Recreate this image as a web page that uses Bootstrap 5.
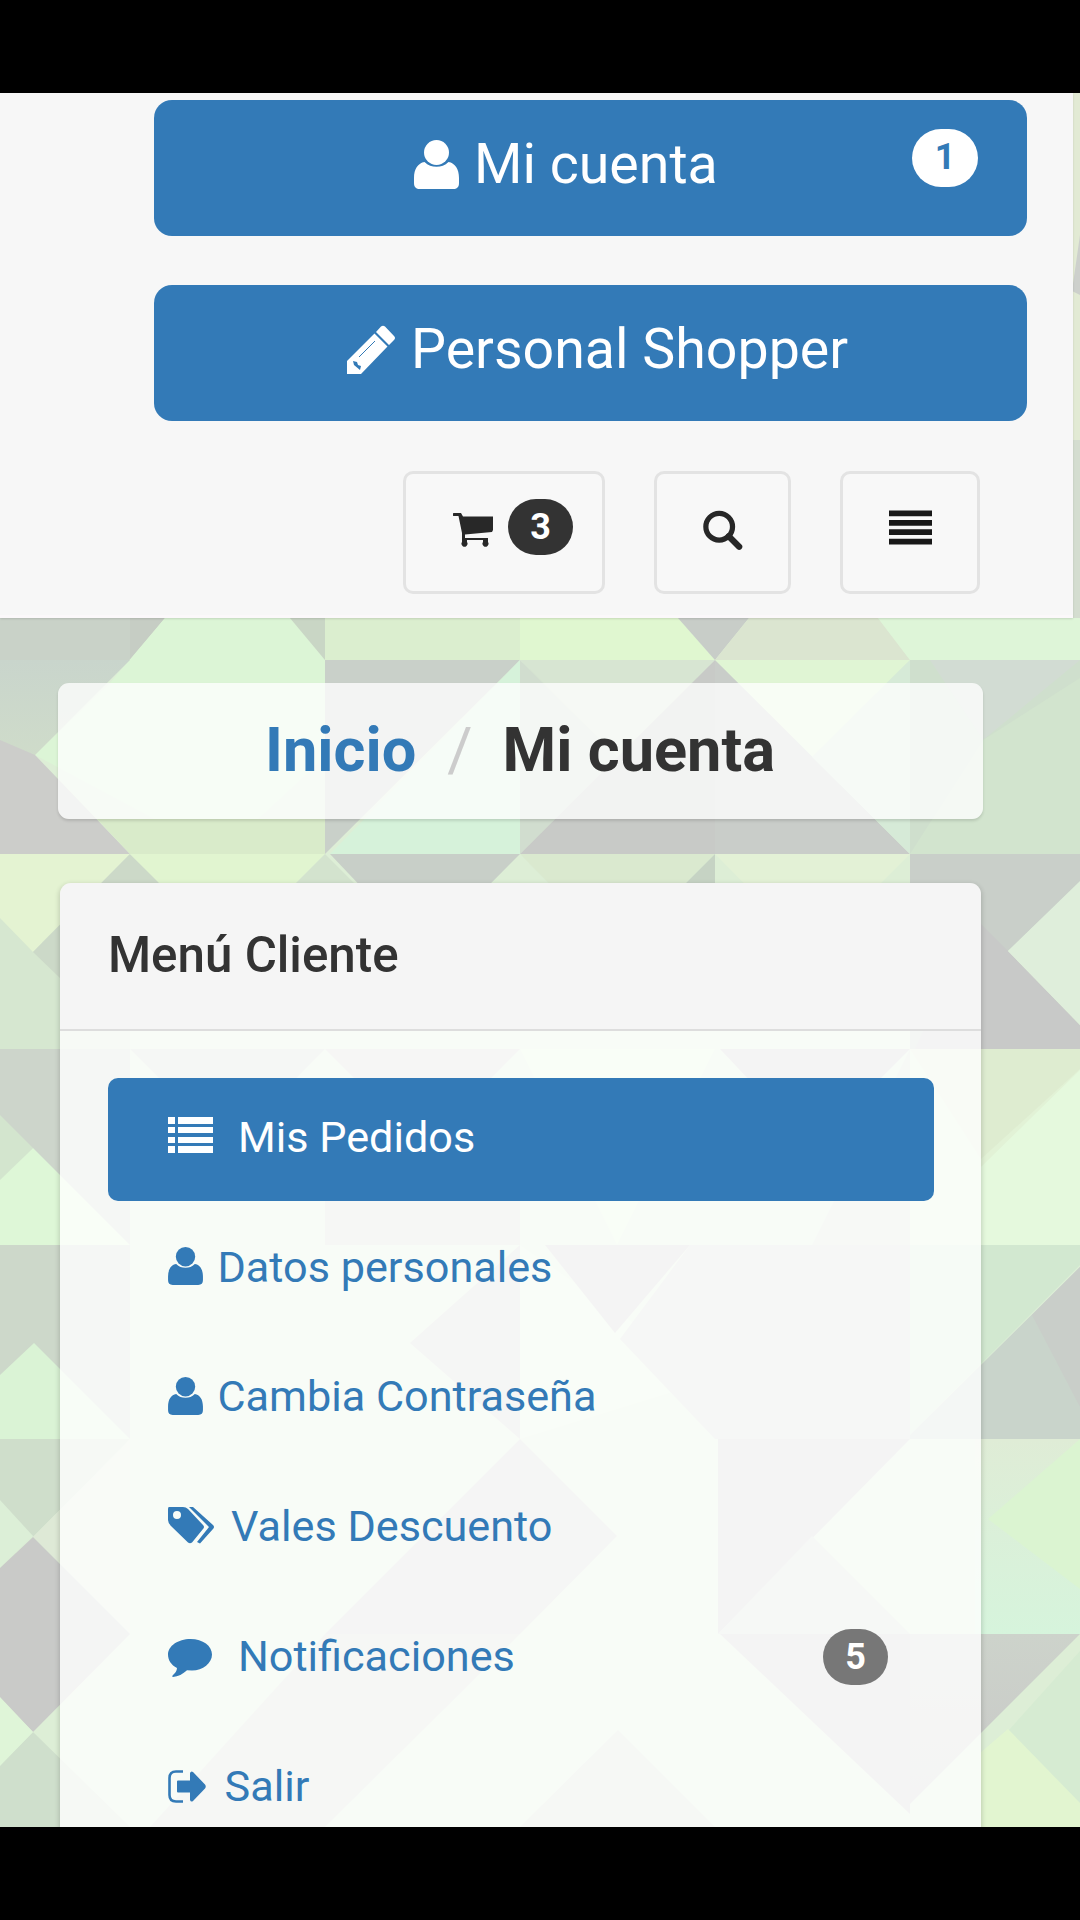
<!DOCTYPE html>
<html lang="es">
<head>
<meta charset="utf-8">
<meta name="viewport" content="width=device-width, initial-scale=1">
<title>Mi cuenta</title>
<link href="https://cdn.jsdelivr.net/npm/bootstrap@5.3.0/dist/css/bootstrap.min.css" rel="stylesheet">
<style>
body{background:#000;font-family:Roboto,"Liberation Sans",sans-serif;color:#333;width:1080px;height:1920px;overflow:hidden}
.screen{height:1734px;margin-top:93px;overflow:hidden;background:#d6e4d0}
.backdrop{position:absolute;left:0;top:0;z-index:0}
.topbar{width:1073px;height:525px;background:#f7f7f7;padding:6.5px 46px 0 154px;border-bottom:3px solid #fbf8fa;box-shadow:0 1px 2px rgba(0,0,0,.12)}
.btn-main{height:136px;border-radius:18px;background:#337ab7;color:#fff;font-size:55.5px;line-height:1;padding:0 0 6px;border:0}
.btn-main:hover{background:#286090;color:#fff}
.btn-tool{height:123px;border:3px solid #e3e3e3;border-radius:10px;background:#f8f8f8;padding:0;color:#222}
.pill{width:65px;height:56px;border-radius:28px;font-size:36px;font-weight:700;line-height:56px;padding:0;text-align:center;display:block}
.btn .pill-one{right:49px;top:29.5px;background:#fff;color:#337ab7;height:58px;width:66px;border-radius:29px}
.pill-dark{background:#333;color:#fff}
.pill-gray{background:#777;color:#fff}
.trail{margin:65px 97px 0 58px;height:136px;border-radius:11px;background:rgba(255,255,255,.77);font-size:61.3px;font-weight:700;line-height:1;box-shadow:0 2px 3px rgba(0,0,0,.13)}
.trail a,.menu-link{color:#337ab7;text-decoration:none}
.sep{font-weight:400;color:#ccc}
.panel{margin:64px 99px 0 60px;height:1100px;border-radius:11px;box-shadow:0 2px 5px 1px rgba(0,0,0,.16)}
.panel-top{height:148px;background:#f5f5f5;border-bottom:2px solid #ddd;border-radius:11px 11px 0 0;padding-left:48px}
.panel-top h1{font-size:49.3px;font-weight:500;line-height:1}
.panel-main{height:952px;background:rgba(255,255,255,.8);padding:47px 47px 0 48px}
.menu-link{height:123px;margin-bottom:6.75px;padding:0 46px 4px 60px;border-radius:10px;font-size:43.2px;line-height:1}
.menu-link.active{background:#337ab7;color:#fff}
svg{flex:none}
</style>
<script src="https://cdn.jsdelivr.net/npm/bootstrap@5.3.0/dist/js/bootstrap.bundle.min.js"></script>
</head>
<body>
<svg width="0" height="0" class="position-absolute">
  <symbol id="user" viewBox="0 0 45 49"><circle cx="22.500" cy="12.500" r="12.500"/><path d="M10.500 22c3.500 3.500 7.500 4.800 12 4.800s8.500-1.300 12-4.800C41 23 45 29 45 38v5c0 4-2 6-6 6H6c-4 0-6-2-6-6v-5c0-9 4-15 10.500-16z"/></symbol>
</svg>
<main class="screen position-relative">
  <svg class="backdrop" width="1080" height="1734" viewBox="0 93 1080 1734" aria-hidden="true">
    <defs>
      <linearGradient id="fade" x1="0" y1="0" x2="0" y2="1"><stop offset="0" stop-color="#dfecd6"/><stop offset="1" stop-color="#d6f4dc"/></linearGradient>
      <linearGradient id="dusk" x1="0" y1="0" x2="0" y2="1"><stop offset="0" stop-color="#cdd3cb"/><stop offset="1" stop-color="#c8c8c7"/></linearGradient>
      <linearGradient id="moss" x1="0" y1="0" x2="0" y2="1"><stop offset="0" stop-color="#c9d5cc"/><stop offset="1" stop-color="#d1dec9"/></linearGradient>
    </defs>
    <rect y="93" width="1080" height="1734" fill="#ddeed6"/>
    <!-- right edge beside the header -->
    <path fill="#e2ead4" d="M1070 93h10v520h-10z"/><path fill="#cdd0cc" d="M1080 235v60l-8-4z"/><path fill="#d4ddd0" d="M1070 440h10v180h-10z"/>
    <!-- row above 660 -->
    <path fill="#c9d2c8" d="M0 618h130v42H0z"/><path fill="#c6cdc4" d="M130 618h35l-35 42z"/>
    <path fill="#dcf5d6" d="M165 618h125l35 42v97l-105 97L35 755l75-72z"/>
    <path fill="#c9d6c5" d="M290 618h35v42z"/><path fill="#dbeecf" d="M325 618h195v42H325z"/>
    <path fill="#e0f7d0" d="M520 618h158l37 42H520z"/><path fill="#c8cdc8" d="M678 618h71l-34 42z"/>
    <path fill="#dbe5d0" d="M749 618h129l32 42H715z"/><path fill="#def5d8" d="M878 618h202v42H910z"/>
    <!-- row 660 to 854 -->
    <path fill="url(#moss)" d="M0 660h130L35 755 0 790z"/><path fill="#cccdca" d="M0 740l35 15 95 99H0z"/>
    <path fill="#d9ebca" d="M97 819h228v35H130z"/>
    <path fill="#c9d0c9" d="M325 660h195L325 854z"/><path fill="#d6f2da" d="M520 660v194H330z"/>
    <path fill="#d7e5d2" d="M520 660h195l-97 97z"/><path fill="#d1ddcf" d="M520 660l98 97-98 97z"/>
    <path fill="#c8cac7" d="M715 660v194H520z"/><path fill="#e0f5d4" d="M715 660h195l-98 97z"/>
    <path fill="#c9cdc9" d="M715 660l195 194H715z"/><path fill="#d6ead7" d="M910 660v194l-98-97z"/>
    <path fill="#cfdfcd" d="M910 660h170v194H910z"/><path fill="#d2dcd3" d="M930 660h150l-97 80z"/><path fill="#d2e4ce" d="M983 740l97-62v176H910z"/>
    <!-- row 854 to 1049 -->
    <path fill="#d6e7d0" d="M0 854h130v195H0z"/><path fill="#e4f3d2" d="M0 854h130l-97 98-33-34z"/>
    <path fill="#ccd9c8" d="M130 854l30 29-100 95-27-26z"/>
    <path fill="#e1f5d0" d="M130 854h195l-97 98z"/><path fill="#d3e3ce" d="M325 854l95 95h-190z"/>
    <path fill="#c8cfc8" d="M330 854h190l-97 98z"/><path fill="#dae9cf" d="M520 854h195l-98 98z"/>
    <path fill="#c6d3c4" d="M715 854v100l-50-50z"/><path fill="#e3f1d6" d="M715 854h195l-98 98z"/>
    <path fill="#c9cfc9" d="M910 854h170v28l-72 69-60 98H910z"/><path fill="#c8c9c8" d="M975 918l33 33 72 74v24H915z"/><path fill="#dfeedb" d="M1008 951l72-70v144z"/>
    <!-- row 1049 to 1245 -->
    <path fill="#cdd5cb" d="M0 1049h130v196H0z"/><path fill="#d3e5ce" d="M0 1115l33 33-33 33z"/>
    <path fill="#def7d7" d="M0 1180l33-32 97 97H0z"/>
    <path fill="#ced8cb" d="M130 1049h195l-97 98z"/><path fill="#cfd0cc" d="M325 1049h195l-97 98z"/>
    <path fill="#dff7d8" d="M520 1049h195l-98 196z"/><path fill="#c9c8c8" d="M720 1049h190l-98 98z"/>
    <path fill="#cfd5ce" d="M325 1147h195v98H325z"/><path fill="#d5dfd3" d="M910 1049v196h-98z"/>
    <path fill="#e2f2d6" d="M910 1049h170v196H910z"/><path fill="#deecd0" d="M910 1049h170v20l-99 90z"/><path fill="#e5f9dd" d="M981 1167l99-97v175h-99z"/>
    <!-- row 1245 to 1439 -->
    <path fill="#cdd8ca" d="M0 1245h130v194H0z"/><path fill="#daf3d5" d="M0 1375l34-32 96 96H0z"/>
    <path fill="#cdcfcb" d="M410 1343l110-98v194z"/><path fill="#dff4d9" d="M520 1245v194l195-60z"/>
    <path fill="#c9c8c8" d="M545 1245h145l-75 88z"/><path fill="#d2d6d0" d="M690 1245h220v194H715l-95-100z"/>
    <path fill="#d2e8d0" d="M910 1245h170v20L910 1435z"/><path fill="#c9d4cb" d="M910 1435l170-168v172H910z"/><path fill="#c9cec9" d="M1032 1315l48-48v140z"/>
    <!-- row 1439 to 1634 -->
    <path fill="#cfdecb" d="M0 1439h130l-97 98-33-35z"/><path fill="#dcefd7" d="M0 1500l33 36-33 32z"/><path fill="#dee9d6" d="M130 1439v195l-97-97z"/>
    <path fill="#c9cac8" d="M0 1568l33-31 97 97-97 98-33-34z"/>
    <path fill="#cbcdca" d="M325 1634l195-195v195z"/><path fill="#ccd2ca" d="M520 1439l97 97-97 98z"/>
    <path fill="#c8c7c9" d="M718 1439h192L718 1634z"/><path fill="#d0d9cf" d="M812 1536l98 98H718z"/>
    <path fill="url(#fade)" d="M975 1439h105v195H975z"/><path fill="#dbf4d1" d="M1080 1439v150l-92-70z"/>
    <!-- row from 1634 down -->
    <path fill="#cfdfcc" d="M33 1732l97 95H0v-62z"/><path fill="#dff5d8" d="M0 1697l33 35-33 34z"/>
    <path fill="#d0d8ce" d="M325 1634h195L325 1827H150z"/><path fill="#c8c8c8" d="M720 1634h190v180z"/>
    <path fill="#d0d9cd" d="M520 1827l98-97 97 97z"/>
    <path fill="url(#dusk)" d="M910 1634h170l-170 170z"/><path fill="#d6ebd2" d="M1080 1651v155l-72-75z"/><path fill="#e2f5d0" d="M980 1753l28-24 72 74v24H980z"/>
  </svg>

  <header class="topbar position-relative">
    <div class="d-grid" style="gap:49px">
      <button class="btn btn-main position-relative d-flex align-items-center">
        <svg width="45" height="49" style="margin-left:259.500px;margin-right:15.500px" fill="currentColor"><use href="#user"/></svg>
        <span>Mi cuenta</span>
        <span class="badge pill pill-one position-absolute">1</span>
      </button>
      <button class="btn btn-main d-flex align-items-center">
        <svg width="50" height="50" viewBox="0 0 50 50" style="margin-left:192px;margin-right:15px"><path fill="#fff" d="M39 1.500q-2-1.500-4 0L30 7l13 13 5-5q2-2 0-4zM28.500 8.500L1 36v13h14L41.500 21.500z"/><path d="M13 32L29 16" stroke="#337ab7" stroke-width="1"/><path fill="#337ab7" d="M7 36l4 1 1 3 3 1-1 4-6-5z"/></svg>
        <span>Personal Shopper</span>
      </button>
    </div>
    <div class="d-flex justify-content-end" style="gap:49px;margin:50px 47px 0 0">
      <button class="btn btn-tool d-flex align-items-center" style="width:202px;padding:0 0 11px 47px">
        <svg width="40" height="35" viewBox="0 0 40 35" fill="#282828" style="margin:7px 15px 0 0"><path d="M1 0h7l2 3.500h30V17l-1 2-27 2.500v3.500h23v2H35v2a3 3 0 1 1-5 0v-2H14v2a3 3 0 1 1-5 0V20L5.500 3H1a1.500 1.500 0 0 1 0-3z"/></svg>
        <span class="badge pill pill-dark" style="top:0">3</span>
      </button>
      <button class="btn btn-tool d-flex align-items-center justify-content-center" style="width:137px;padding-bottom:3px">
        <svg width="40" height="41" viewBox="0 0 42 42" fill="none" stroke="#272727"><circle cx="17" cy="17" r="14" stroke-width="5.500"/><path d="M27 27l11 11" stroke-width="6.500" stroke-linecap="round"/></svg>
      </button>
      <button class="btn btn-tool d-flex align-items-center justify-content-center" style="width:140px;padding-bottom:10px">
        <svg width="43" height="35" viewBox="0 0 44 35" fill="#181818"><path d="M0 0h44v6H0zM0 9.700h44v6H0zM0 19.300h44v6H0zM0 29h44v6H0z"/></svg>
      </button>
    </div>
  </header>

  <nav class="trail position-relative d-flex align-items-center">
    <a href="#" style="margin-left:207px">Inicio</a>
    <span class="sep" style="margin-left:31px">/</span>
    <span style="margin-left:30px">Mi cuenta</span>
  </nav>

  <section class="panel position-relative">
    <div class="panel-top d-flex align-items-center"><h1 class="m-0">Menú Cliente</h1></div>
    <nav class="panel-main nav flex-column flex-nowrap">
      <a href="#" class="menu-link active d-flex align-items-center">
        <svg width="45" height="36" viewBox="0 0 45 36" fill="currentColor" style="margin:-5px 25px 0 0"><path d="M0 0h7v7H0zM10 0h35v7H10zM0 10h7v6H0zM10 10h35v6H10zM0 20h7v6H0zM10 20h35v6H10zM0 29h7v7H0zM10 29h35v7H10z"/></svg>Mis Pedidos</a>
      <a href="#" class="menu-link d-flex align-items-center">
        <svg width="35" height="38" fill="currentColor" style="margin:-2px 14.500px 0 0"><use href="#user"/></svg>Datos personales</a>
      <a href="#" class="menu-link d-flex align-items-center">
        <svg width="35" height="38" fill="currentColor" style="margin:-2px 14.500px 0 0"><use href="#user"/></svg>Cambia Contraseña</a>
      <a href="#" class="menu-link d-flex align-items-center">
        <svg width="47" height="38" viewBox="0 0 47 38" fill="currentColor" style="margin:-3px 16px 0 0"><path fill-rule="evenodd" d="M1 1h14q3 0 5 2l15 16q2 2 0 4L24 36.500q-2 1.500-4 0L3 20q-3-3-3-6V3q0-2 1-2zm8 4a4 4 0 1 0 0 8 4 4 0 0 0 0-8zM21 1h4l20 18q2 2 0 4L32 37.500l-3-1.500 12-15z"/></svg>Vales Descuento</a>
      <a href="#" class="menu-link d-flex align-items-center">
        <svg width="45" height="38" viewBox="0 0 45 38" fill="currentColor" style="margin:2px 25px 0 0"><path d="M22.500 0C35 0 44 7 44 15.500S35 31.500 24 31.500l-5-.3C15 35 10 37.500 5 38c-1 0-1-1 0-2 2-2 4-4 4-7C3 26 0 21 0 15.500 0 7 10 0 22.500 0z"/></svg>Notificaciones
        <span class="badge pill pill-gray ms-auto">5</span></a>
      <a href="#" class="menu-link d-flex align-items-center">
        <svg width="38" height="33" viewBox="0 0 38 33" fill="currentColor" style="margin:0 18.500px 0 0"><path d="M15 1.500H8q-6.500 0-6.500 6.500v17q0 6.500 6.500 6.500h7" fill="none" stroke="currentColor" stroke-width="2.600"/><path d="M10 10.500h12V3q1-2.500 3-1l12 12.500q1.500 2 0 4L25 31q-2 1.500-3-1v-7.500H10q-1 0-1-1v-10q0-1 1-1z"/></svg>Salir</a>
    </nav>
  </section>
</main>
</body>
</html>
